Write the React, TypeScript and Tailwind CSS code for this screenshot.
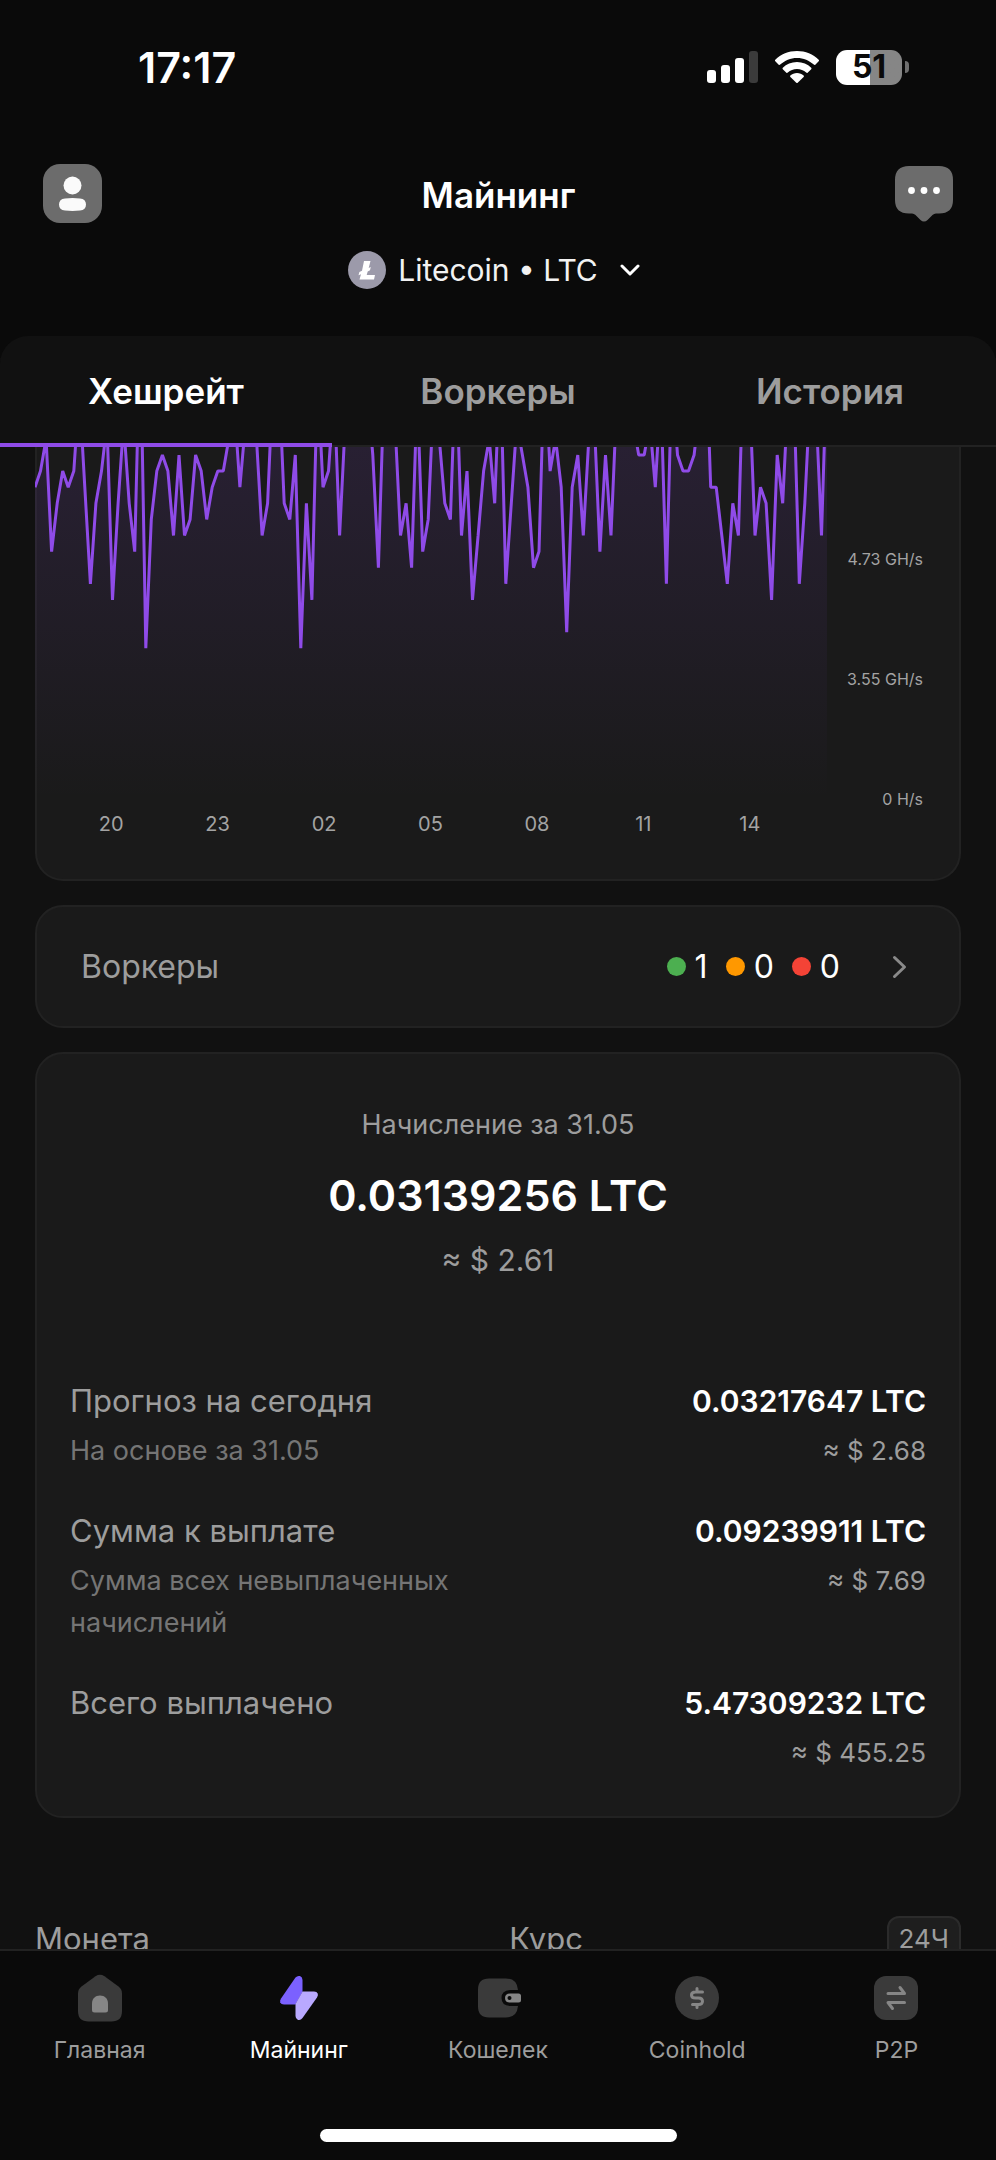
import React from "react";

// One sample every ~10 minutes, counted in grid steps below the visible top of the plot.
const HASHRATE = [
  2, 1, -1, 6, 3, 1, 2, 1, -4, 2, 8, 3, 1, -2, 9, 3, -2, 3, 6, -8,
  12, 4, 1, 0, 1, 5, 0, 5, 4, 0, 1, 4, 2, 1, 1, -1, -3, 2, -2, -3,
  -1, 5, 3, -5, -5, 3, 4, 0, 12, 3, 9, -5, 2, 1, -4, 5, -2, -4, -4, -4,
  -4, 0, 7, -4, -5, -2, 5, 3, 7, -4, 6, 4, -4, -1, 3, 4, -6, 5, 1, 9,
  5, 1, -1, 3, -6, 8, 3, -2, 0, 2, 7, 6, -6, 1, -1, 2, 11, 2, 0, 5,
  -1, -2, 6, 0, 5, -3, -5, -5, -2, 0, 0, -2, 2, -4, 8, -5, 0, 1, 1, 0,
  -3, -8, 2, 2, 5, 8, 3, 5, -7, -4, 5, 2, 3, 9, 0, 3, -4, -4, 8, 3,
  -4, -3, 5, -6,
];

const CHART_WIDTH = 792;
const CHART_HEIGHT = 353;
const HOURS = ["20", "23", "02", "05", "08", "11", "14"];

const linePoints = HASHRATE.map((level, i) => {
  const x = (i * CHART_WIDTH) / (HASHRATE.length - 1);
  const y = 8 + level * 16.1;
  return `${x.toFixed(1)},${y.toFixed(1)}`;
}).join(" ");

interface PayoutRow {
  title: string;
  note?: string;
  amount: string;
  fiat: string;
}

const PAYOUTS: PayoutRow[] = [
  { title: "Прогноз на сегодня", note: "На основе за 31.05", amount: "0.03217647 LTC", fiat: "≈ $ 2.68" },
  { title: "Сумма к выплате", note: "Сумма всех невыплаченных начислений", amount: "0.09239911 LTC", fiat: "≈ $ 7.69" },
  { title: "Всего выплачено", amount: "5.47309232 LTC", fiat: "≈ $ 455.25" },
];

function StatusBar() {
  return (
    <div className="flex items-center justify-between pl-[138px] pr-[87px] pt-[41px]">
      <span className="text-[43px] font-semibold leading-[52px]">17:17</span>
      <div className="flex items-center gap-[17px]">
        <svg className="h-8 w-[51px]" viewBox="0 0 51 32" fill="#fff">
          <rect x="0" y="19" width="9" height="13" rx="3" />
          <rect x="14" y="14" width="9" height="18" rx="3" />
          <rect x="28" y="7" width="9" height="25" rx="3" />
          <rect x="42" y="0" width="9" height="32" rx="3" fill="#3b3b3b" />
        </svg>
        <svg className="h-8 w-11" viewBox="0 0 44 32" fill="#fff">
          <path d="M22 0C30.500 0 38.200 3.300 43.700 8.700Q44.400 9.500 43.700 10.300L40.300 13.700Q39.600 14.300 38.800 13.600C34.400 9.400 28.500 6.900 22 6.900S9.600 9.400 5.200 13.600Q4.400 14.300 3.700 13.700L.3 10.300Q-.4 9.500.3 8.700C5.800 3.300 13.500 0 22 0Z" />
          <path d="M22 11C27.600 11 32.600 13.200 36.200 16.700Q36.900 17.500 36.200 18.200L32.600 21.700Q32 22.300 31.200 21.600C28.700 19.400 25.500 18 22 18S15.300 19.400 12.800 21.600Q12 22.300 11.400 21.700L7.800 18.200Q7.100 17.500 7.800 16.700C11.400 13.200 16.400 11 22 11Z" />
          <path d="M22 22C24.600 22 26.900 23 28.600 24.600Q29.300 25.300 28.600 26L22.700 31.800Q22 32.400 21.300 31.800L15.400 26Q14.700 25.300 15.400 24.600C17.100 23 19.400 22 22 22Z" />
        </svg>
        <div className="flex items-center gap-[3px]">
          <div className="flex h-[35px] w-[66px] items-center justify-center rounded-[11px] bg-linear-to-r from-white from-51% to-[#868686] to-51% text-[32px] font-bold leading-none text-[#0a0a0a]">
            51
          </div>
          <div className="h-3 w-1 rounded-r-full bg-[#6f6f6f]" />
        </div>
      </div>
    </div>
  );
}

function Header() {
  return (
    <header className="pb-11 pt-[67px]">
      <div className="flex items-start justify-between px-[43px]">
        <button type="button" aria-label="Профиль" className="mt-1">
          <svg className="size-[59px]" viewBox="0 0 59 59">
            <rect width="59" height="59" rx="17" fill="#6c6c6c" />
            <circle cx="29.500" cy="21.500" r="9" fill="#fafafa" />
            <path d="M16 40.500Q16 35 22 34.400Q29.500 33.700 37 34.400Q43 35 43 40.500T37 46.500Q29.500 47.300 22 46.500Q16 46 16 40.500Z" fill="#fafafa" />
          </svg>
        </button>
        <h1 className="mt-[11px] text-[35px] font-semibold leading-[48px]">Майнинг</h1>
        <button type="button" aria-label="Сообщения" className="mt-[6px]">
          <svg className="h-14 w-[58px]" viewBox="0 0 58 56">
            <path
              d="M14 0H44Q58 0 58 14V34Q58 47.500 44 47.500H41Q39 47.500 37.500 49L32.500 54Q29 57 25.500 54L20.500 49Q19 47.500 17 47.500H14Q0 47.500 0 34V14Q0 0 14 0Z"
              fill="#6c6c6c"
            />
            <circle cx="16.500" cy="24.500" r="3.400" fill="#fff" />
            <circle cx="29" cy="24.500" r="3.400" fill="#fff" />
            <circle cx="41.500" cy="24.500" r="3.400" fill="#fff" />
          </svg>
        </button>
      </div>
      <button type="button" className="mx-auto mt-[25px] flex items-center pr-2 text-[30px] leading-[44px] text-[#f2f2f2]">
        <svg className="mr-3 h-[38px] w-[38px]" viewBox="0 0 38 38">
          <circle cx="19" cy="19" r="19" fill="#9c9aaa" />
          <path d="M16 10H22.500L20.700 17L22.800 16L22 19.300L19.700 20.400L18.700 24H27L26 28.500H11.500L13 23.200L10.500 24.300L11.400 21L14 19.700Z" fill="#fff" />
        </svg>
        Litecoin • LTC
        <svg className="ml-[22px] h-3 w-5" viewBox="0 0 20 12" fill="none" stroke="#fff" strokeWidth="3" strokeLinecap="round" strokeLinejoin="round">
          <path d="M2 2L10 10L18 2" />
        </svg>
      </button>
    </header>
  );
}

function Tabs() {
  return (
    <div role="tablist" className="grid grid-cols-3 rounded-t-[28px] bg-[#111111] text-[35px] font-semibold leading-[48px] text-[#9d9d9d] shadow-[inset_0_-2px_0_#222222]">
      <button type="button" role="tab" aria-selected="true" className="border-b-4 border-[#8f4be8] pb-7 pt-[31px] text-white">
        Хешрейт
      </button>
      <button type="button" role="tab" aria-selected="false" className="border-b-4 border-transparent pb-7 pt-[31px]">
        Воркеры
      </button>
      <button type="button" role="tab" aria-selected="false" className="border-b-4 border-transparent pb-7 pt-[31px]">
        История
      </button>
    </div>
  );
}

function HashrateChart() {
  return (
    <section className="rounded-b-[28px] border-2 border-t-0 border-[#222222] bg-[#1a1a1a] pb-[41px]">
      <div className="flex pr-9">
        <div className="-ml-0.5 min-w-0 flex-1">
          <svg className="h-[353px] w-full" viewBox={`0 0 ${CHART_WIDTH} ${CHART_HEIGHT}`} preserveAspectRatio="none">
            <defs>
              <linearGradient id="area" x1="0" y1="0" x2="0" y2={CHART_HEIGHT} gradientUnits="userSpaceOnUse">
                <stop offset="0" stopColor="#8f4be8" stopOpacity="0.12" />
                <stop offset="1" stopColor="#8f4be8" stopOpacity="0" />
              </linearGradient>
            </defs>
            <polygon points={`0,${CHART_HEIGHT} ${linePoints} ${CHART_WIDTH},${CHART_HEIGHT}`} fill="url(#area)" />
            <polyline points={linePoints} fill="none" stroke="#8f4be8" strokeWidth="3" strokeLinejoin="bevel" />
          </svg>
          <div className="grid grid-cols-7 pl-[23px] pr-6 pt-[10px] text-center text-[20px] leading-7 text-[#a3a3a3]">
            {HOURS.map((hour) => (
              <span key={hour}>{hour}</span>
            ))}
          </div>
        </div>
        <div className="flex w-24 flex-col gap-24 pt-[100px] text-right text-[16px] leading-6 text-[#a3a3a3]">
          <span>4.73 GH/s</span>
          <span>3.55 GH/s</span>
          <span>0 H/s</span>
        </div>
      </div>
    </section>
  );
}

function WorkersCard() {
  return (
    <button type="button" className="flex h-[123px] w-full items-center rounded-[28px] border-2 border-[#222222] bg-[#1a1a1a] pl-11 pr-[52px] text-[32px] leading-[42px] text-white">
      <span className="flex-1 text-left text-[#9d9d9d]">Воркеры</span>
      <span className="flex items-center gap-[18px]">
        <span className="flex items-center gap-[9px]">
          <i className="size-[19px] rounded-full bg-[#4caf50]" />1
        </span>
        <span className="flex items-center gap-[9px]">
          <i className="size-[19px] rounded-full bg-[#ff9800]" />0
        </span>
        <span className="flex items-center gap-[9px]">
          <i className="size-[19px] rounded-full bg-[#f44336]" />0
        </span>
      </span>
      <svg className="ml-[52px] h-6 w-[15px]" viewBox="0 0 15 24" fill="none" stroke="#8a8a8a" strokeWidth="3" strokeLinecap="round" strokeLinejoin="round">
        <path d="M2.500 2.500L12.500 12L2.500 21.500" />
      </svg>
    </button>
  );
}

function EarningsCard() {
  return (
    <section className="rounded-[28px] border-2 border-[#222222] bg-[#1a1a1a] px-[33px] pb-[42px] pt-[50px] text-[#9d9d9d]">
      <div className="text-center">
        <p className="text-[27px] leading-[42px]">Начисление за 31.05</p>
        <p className="mt-[21px] text-[43px] font-semibold leading-[56px] text-white">0.03139256 LTC</p>
        <p className="mt-4 text-[30px] leading-[42px]">≈ $ 2.61</p>
      </div>
      <dl className="mt-[99px] flex flex-col gap-[38px]">
        {PAYOUTS.map((row) => (
          <div key={row.title} className="flex justify-between">
            <dt className="w-[420px] text-[31px] leading-[42px]">
              {row.title}
              {row.note && <span className="mt-2 block text-[27px] leading-[42px] text-[#757575]">{row.note}</span>}
            </dt>
            <dd className="text-right text-[30px] font-semibold leading-[42px] text-white">
              {row.amount}
              <span className="mt-2 block text-[26px] font-normal leading-[42px] text-[#9d9d9d]">{row.fiat}</span>
            </dd>
          </div>
        ))}
      </dl>
    </section>
  );
}

function CoinTable() {
  return (
    <table className="mt-[74px] w-full table-fixed text-[31px] leading-[42px] text-[#9d9d9d]">
      <thead>
        <tr>
          <th className="w-[51%] text-left font-normal">Монета</th>
          <th className="pl-0.5 text-left font-normal">Курс</th>
          <th className="text-right font-normal">
            <button type="button" className="rounded-xl border-2 border-[#2b2b2b] bg-[#1e1e1e] px-[10px] text-[26px] leading-[42px]">
              24Ч
            </button>
          </th>
        </tr>
      </thead>
    </table>
  );
}

function HomeIcon() {
  return (
    <svg className="size-12" viewBox="0 0 48 48">
      <path d="M19.500 2.200Q24 -.6 28.500 2.200L42.500 12.500Q46 15.200 46 19.500V37Q46 47.500 35.500 47.500H12.500Q2 47.500 2 37V19.500Q2 15.200 5.500 12.500Z" fill="#3a3a3a" />
      <path d="M16 29.500C16 24.500 19.300 21.500 24 21.500S32 24.500 32 29.500V36Q32 38.500 29.500 38.500H18.500Q16 38.500 16 36Z" fill="#868686" />
    </svg>
  );
}

function MiningIcon() {
  return (
    <svg className="size-12" viewBox="0 0 48 48">
      <path d="M20.500 3.500Q22.500 1.300 25 2.100Q27.500 3 27.500 6V18L20.500 30.500H9Q6 30.500 5.200 28.300Q4.700 26.500 6 24.500Z" fill="#7b61ff" />
      <path d="M27.500 17.500H39Q42 17.500 42.800 19.700Q43.300 21.500 42 23.500L27.500 44Q25.500 46.700 23 45.900Q20.500 45 20.500 42V30Z" fill="#b9a9ff" />
    </svg>
  );
}

function WalletIcon() {
  return (
    <svg className="size-12" viewBox="0 0 48 48">
      <path d="M15 4.500H32Q43 4.500 44 16H37Q27.500 16 27.500 24T37 32H44Q43 43.500 32 43.500H15Q4 43.500 4 32.500V15.500Q4 4.500 15 4.500Z" fill="#3a3a3a" />
      <path d="M36 19.500H44.500Q47 19.500 47 22V26Q47 28.500 44.500 28.500H36Q31 28.500 31 24T36 19.500Z" fill="#868686" />
      <circle cx="35.500" cy="24" r="2" fill="#0a0a0a" />
    </svg>
  );
}

function CoinholdIcon() {
  return (
    <svg className="size-12" viewBox="0 0 48 48" fill="none" stroke="#868686" strokeWidth="3" strokeLinecap="round">
      <circle cx="24" cy="24" r="22" fill="#3a3a3a" stroke="none" />
      <path d="M29.500 18H22.500Q18.500 18 18.500 21T22.500 24H25.500Q29.500 24 29.500 27.300T25.500 30.500H19.500M24 14.500V17M24 31V33.500" />
    </svg>
  );
}

function P2PIcon() {
  return (
    <svg className="size-12" viewBox="0 0 48 48" fill="none" stroke="#868686" strokeWidth="3" strokeLinecap="round" strokeLinejoin="round">
      <rect x="2" y="2" width="44" height="44" rx="12" fill="#3a3a3a" stroke="none" />
      <path d="M16 19.500H32.500L28 13.500M32.500 28.500H16L20.500 34.500" />
    </svg>
  );
}

const NAV = [
  { label: "Главная", Icon: HomeIcon },
  { label: "Майнинг", Icon: MiningIcon, active: true },
  { label: "Кошелек", Icon: WalletIcon },
  { label: "Coinhold", Icon: CoinholdIcon },
  { label: "P2P", Icon: P2PIcon },
];

function BottomNav() {
  return (
    <footer className="border-t-2 border-[#222222] bg-[#0a0a0a] pb-[18px] pt-[23px]">
      <nav className="grid grid-cols-5">
        {NAV.map(({ label, Icon, active }) => (
          <a
            key={label}
            href="#"
            aria-current={active ? "page" : undefined}
            className={`flex flex-col items-center gap-3 text-[23px] leading-8 ${active ? "text-white" : "text-[#9d9d9d]"}`}
          >
            <Icon />
            {label}
          </a>
        ))}
      </nav>
      <div className="mx-auto mt-[63px] h-[13px] w-[357px] rounded-full bg-white" />
    </footer>
  );
}

export default function App() {
  return (
    <div className="flex h-screen flex-col bg-[#0a0a0a] font-['Inter',sans-serif] text-white">
      <StatusBar />
      <Header />
      <Tabs />
      <main className="min-h-0 flex-1 overflow-hidden bg-[#111111] px-[35px]">
        <div className="flex flex-col gap-6">
          <HashrateChart />
          <WorkersCard />
          <EarningsCard />
          <CoinTable />
        </div>
      </main>
      <BottomNav />
    </div>
  );
}
